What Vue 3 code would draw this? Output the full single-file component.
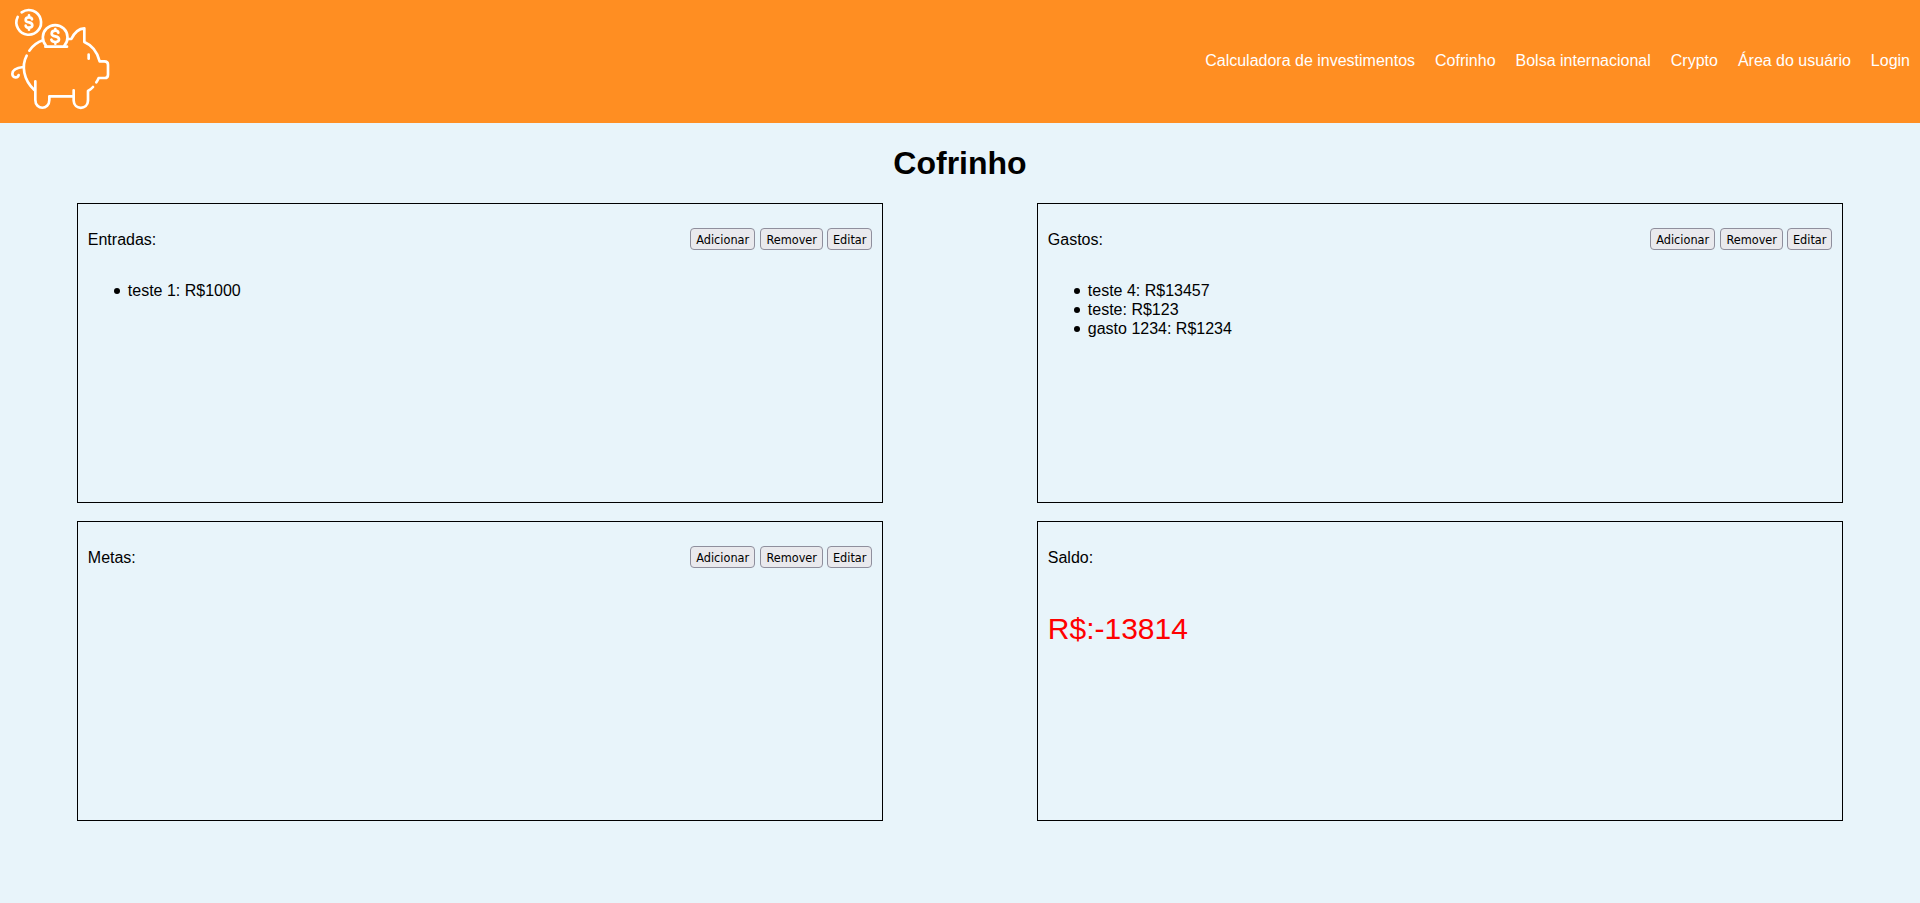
<script setup>
const links = ['Calculadora de investimentos', 'Cofrinho', 'Bolsa internacional', 'Crypto', 'Área do usuário', 'Login']
const actions = [
  { label: 'Adicionar', cls: 'add' },
  { label: 'Remover', cls: 'remove' },
  { label: 'Editar', cls: 'edit' },
]
const panels = [
  { title: 'Entradas:', items: ['teste 1: R$1000'], editable: true },
  { title: 'Gastos:', items: ['teste 4: R$13457', 'teste: R$123', 'gasto 1234: R$1234'], editable: true },
  { title: 'Metas:', items: [], editable: true },
  { title: 'Saldo:', items: [], balance: 'R$:-13814' },
]
</script>

<template>
  <div class="page">
    <header class="header">
      <svg class="logo" viewBox="0 0 369 369" fill="none" stroke="#fff" stroke-width="8" stroke-linecap="round" stroke-linejoin="round">
        <path d="M53 51A37 37 0 1 0 65 37" />
        <path d="M96 58Q95 52 87 52Q77 52 77 60Q77 66 87 67Q97 69 97 76Q97 83 87 83Q78 83 77 77M87 46V52M87 83V89" />
        <path d="M138 137A37 37 0 1 1 193 137" />
        <path d="M175 98Q174 92 166 92Q155 92 155 101Q155 107 166 109Q177 111 177 118Q177 126 166 126Q156 126 154 119M166 87V92M166 126V131" />
        <path d="M136 140H201" />
        <path d="M129 121Q104 129 88 152" />
        <path d="M80 167C64 197 70 240 103 270" />
        <path d="M70 201C49 203 37 210 37 222C38 235 54 235 56 225" />
        <path d="M106 244V300C106 331 148 331 148 300V289H221V302C222 331 263 331 264 302V273Q273 268 279 261M221 289V271" />
        <path d="M204 117H214C222 100 232 86 253 85V126C279 137 293 160 299 184H313Q324 184 324 194V224Q324 234 314 234H296Q293 241 289 247" />
        <path d="M266 164V176" />
      </svg>
      <nav class="nav">
        <a v-for="link in links" :key="link">{{ link }}</a>
      </nav>
    </header>
    <h1>Cofrinho</h1>
    <main class="panels">
      <section v-for="panel in panels" :key="panel.title" class="panel">
        <div class="panel-head">
          <span>{{ panel.title }}</span>
          <div v-if="panel.editable" class="actions">
            <button v-for="action in actions" :key="action.label" :class="action.cls">{{ action.label }}</button>
          </div>
        </div>
        <ul v-if="panel.items.length">
          <li v-for="item in panel.items" :key="item">{{ item }}</li>
        </ul>
        <p v-if="panel.balance" class="balance">{{ panel.balance }}</p>
      </section>
    </main>
  </div>
</template>

<style>
body { margin: 0; background: #e8f4fa; }
</style>

<style scoped>
.page {
  min-height: 903px;
  background: #e8f4fa;
  color: #000;
  font: 16px/19px "Liberation Sans", Arial, sans-serif;
}
.header {
  height: 123px;
  box-sizing: border-box;
  padding-right: 10px;
  display: flex;
  align-items: center;
  justify-content: space-between;
  background: #ff8e22;
}
.logo { width: 123px; height: 123px; }
.nav { display: flex; gap: 20px; color: #fff; margin-top: -2px; }
h1 {
  margin: 22px 0 21px;
  font-size: 32px;
  line-height: 37px;
  text-align: center;
}
.panels {
  display: grid;
  grid-template-columns: 42% 42%;
  justify-content: space-around;
  row-gap: 18px;
}
.panel {
  box-sizing: border-box;
  height: 300px;
  border: 1px solid #000;
  padding: 24px 10px 0;
}
.panel-head {
  height: 22px;
  display: flex;
  align-items: center;
  justify-content: space-between;
}
.actions { display: flex; gap: 4px; }
button {
  box-sizing: border-box;
  height: 22px;
  padding: 2px 0 0;
  border: 1px solid #8f8f9d;
  border-radius: 4px;
  background: #e9e9ed;
  color: #000;
  font: 12.6px/18px "DejaVu Sans Condensed", "DejaVu Sans", sans-serif;
  font-stretch: condensed;
  white-space: nowrap;
}
.add { width: 65px; margin-right: 1px; }
.remove { width: 63px; }
.edit { width: 45px; }
ul { list-style: none; margin: 31px 0 0; padding: 0 0 0 40px; }
li { display: flex; align-items: center; }
li::before {
  content: "";
  width: 6px;
  height: 6px;
  margin: 1px 8px 0 -14px;
  border-radius: 50%;
  background: #000;
}
.balance { margin: 44px 0 0; font-size: 30px; line-height: 34px; color: #f00; }
</style>
